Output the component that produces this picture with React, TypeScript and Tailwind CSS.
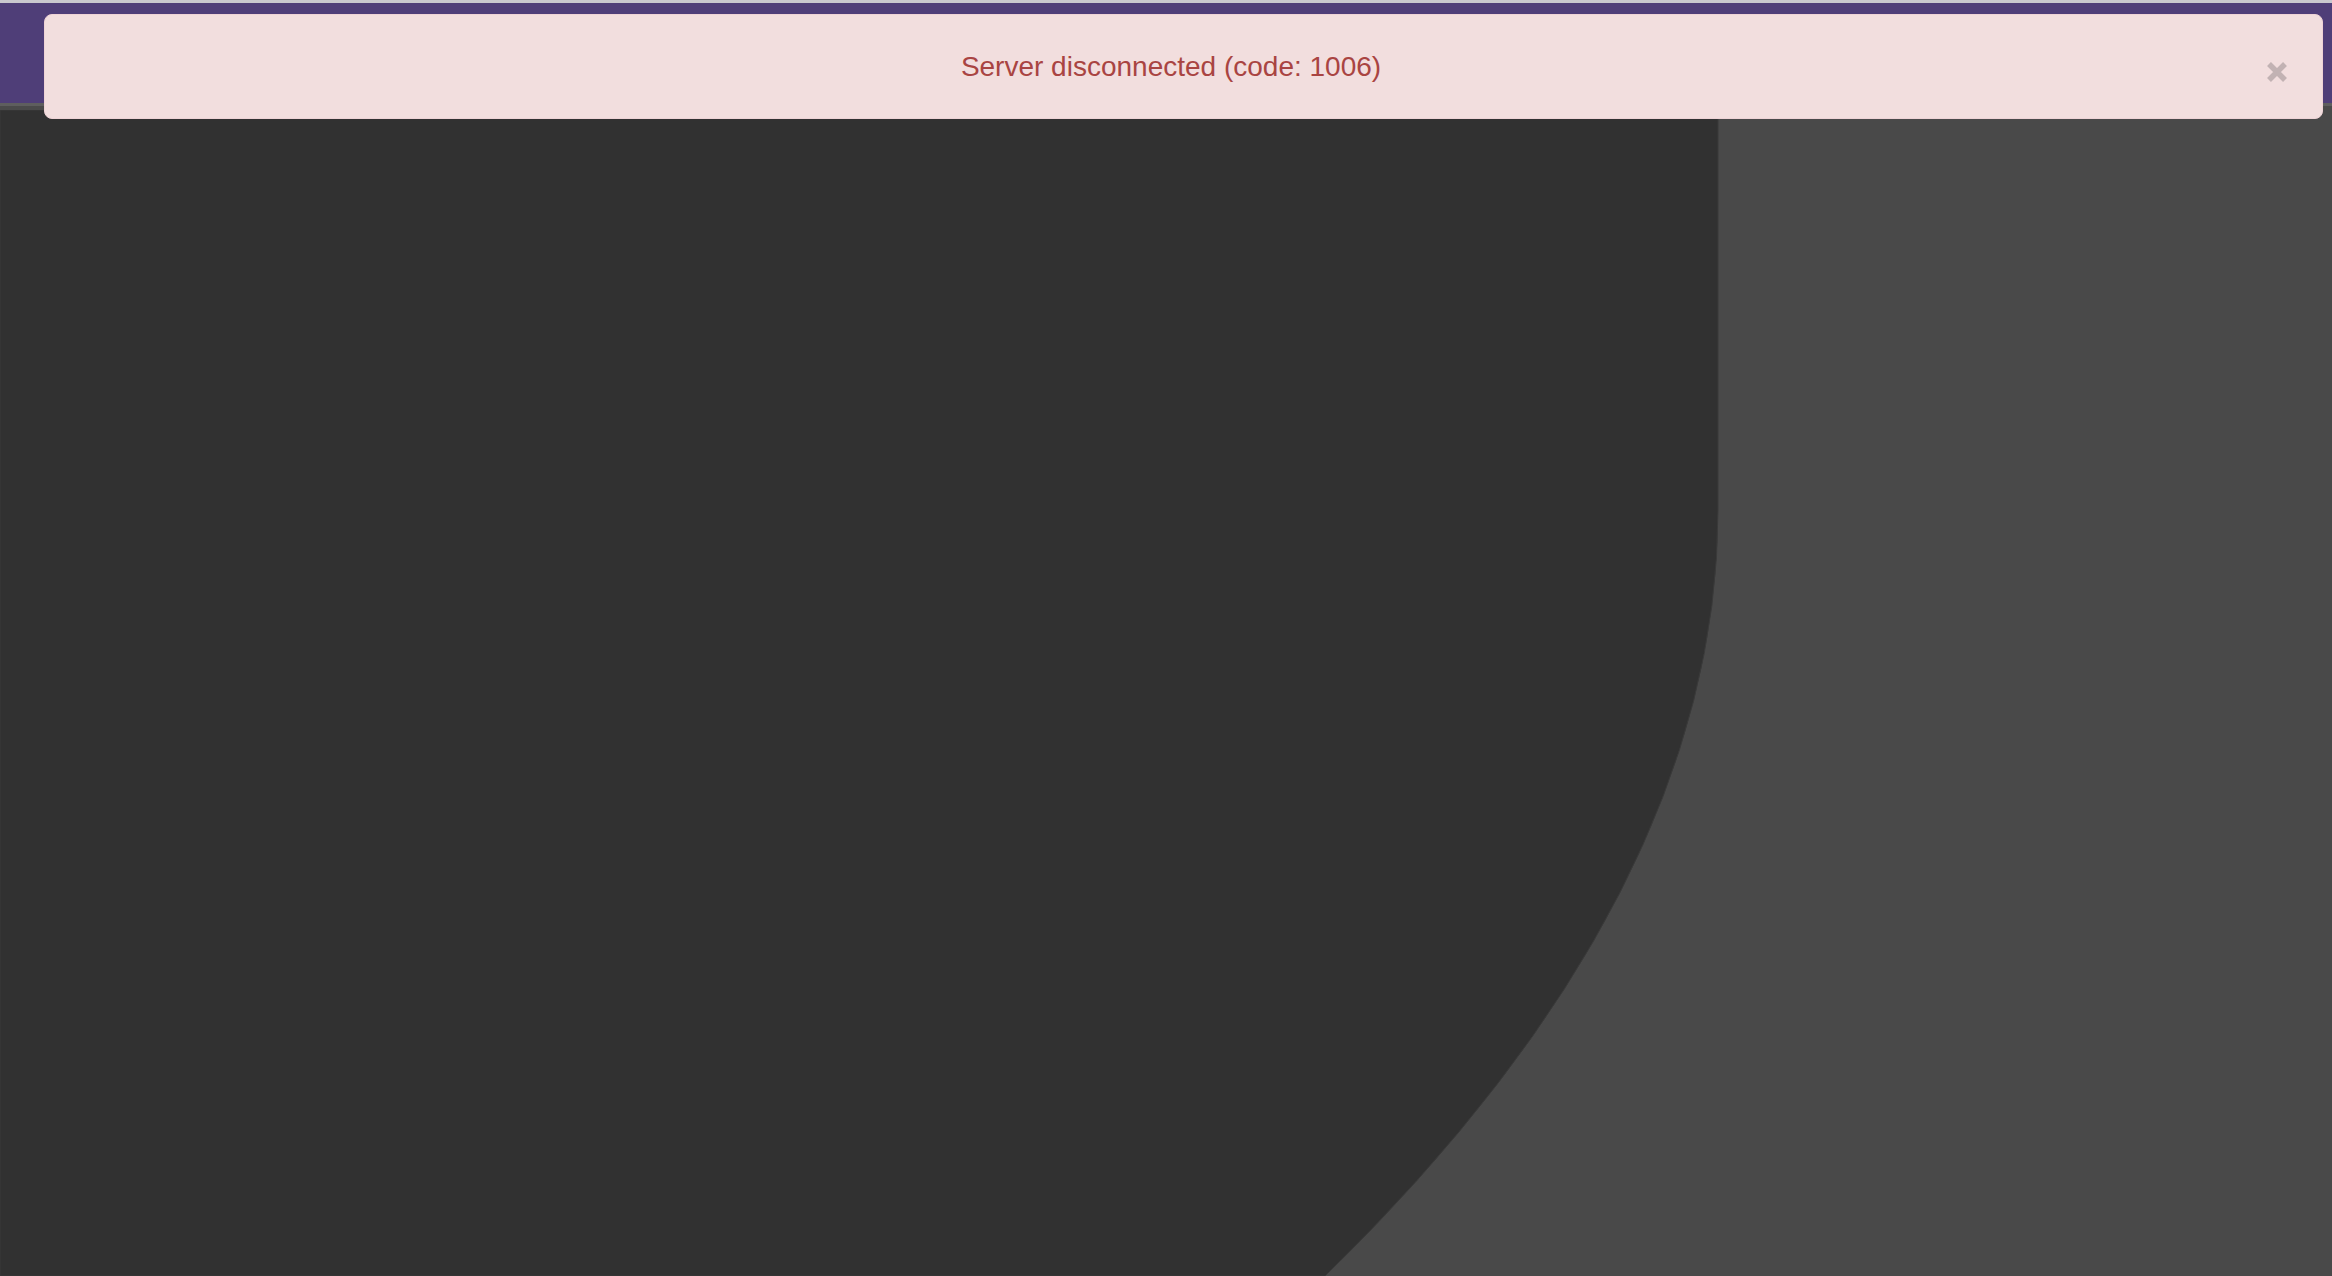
import React from "react";

// dark area edge: straight down to y=510, then a parabola to the bottom (page coords minus header)
const TOP = 110;
const darkPath = `M0 0 L1718 0 L1718 ${510 - TOP} Q1718 ${893 - TOP} 1325 ${1276 - TOP} L0 ${1276 - TOP} Z`;

const CloseIcon: React.FC = () => (
  <svg width="20" height="20" viewBox="0 0 20 20">
    <path d="M2 2 L18 18 M18 2 L2 18" stroke="#c2b2b3" strokeWidth="5.5" />
  </svg>
);

const Alert: React.FC = () => (
  <div className="absolute left-[44px] right-[9px] top-[14px] h-[105px] rounded-[8px] bg-[#f2dede] border border-[#eed3d6] flex items-center pl-[30px] pr-[55px]">
    <p
      className="flex-1 text-center text-[28px] leading-none text-[#a94442]"
      style={{ fontFamily: '"Liberation Sans", Arial, sans-serif' }}
    >
      Server disconnected (code: 1006)
    </p>
    <button className="absolute right-[35px] top-[47px] w-[20px] h-[20px] flex items-center justify-center">
      <CloseIcon />
    </button>
  </div>
);

export default function App() {
  return (
    <div className="relative w-full h-screen overflow-hidden flex flex-col bg-[#313131]">
      <header className="flex flex-col shrink-0">
        <div className="h-[3px] bg-[#c9c8ce]" />
        <div className="h-[100px] bg-[#4f3e78]" />
        <div className="h-[3px] bg-[#5e5e5e]" />
        <div className="h-[4px] bg-[#4a4a4a]" />
      </header>
      <main className="relative flex-1 bg-[#494949]">
        <svg className="absolute inset-0 w-full h-full" viewBox="0 0 2332 1166" preserveAspectRatio="none">
          <path d={darkPath} fill="#313131" stroke="#3a3a3a" strokeWidth="1" />
        </svg>
      </main>
      <Alert />
    </div>
  );
}
